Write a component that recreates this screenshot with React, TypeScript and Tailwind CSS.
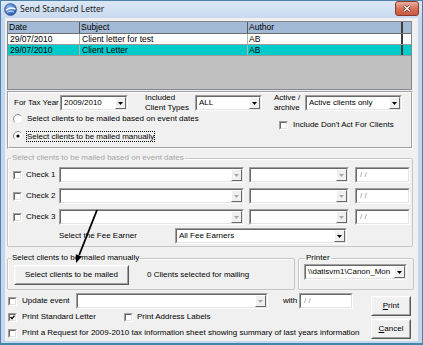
import React from "react"
import clsx from "clsx"

/**
 * Small pieces of a classic Windows dialog
 */
const Arrow = ({ disabled }: { disabled?: boolean }) => (
  <svg width="5" height="3" viewBox="0 0 5 3">
    <path d="M0 0h5L2.5 3z" fill={disabled ? "#a8a8a8" : "#000"} />
  </svg>
)

const Sunken: React.FC<{ className?: string; children?: React.ReactNode }> = ({
  className,
  children,
}) => (
  <div
    className={clsx(
      "flex shrink-0 bg-white border border-t-[#a0a0a0] border-l-[#a0a0a0] border-r-white border-b-white",
      className
    )}
  >
    <div className="relative flex flex-1 min-w-0 border border-t-[#696969] border-l-[#696969] border-r-[#e3e3e3] border-b-[#e3e3e3]">
      {children}
    </div>
  </div>
)

interface ComboProps {
  className: string
  text?: string
  disabled?: boolean
}

const Combo: React.FC<ComboProps> = ({ className, text, disabled }) => (
  <Sunken className={clsx("h-[16px]", className)}>
    <span className="flex-1 min-w-0 pl-[2px] leading-[12px] whitespace-nowrap overflow-hidden">
      {text}
    </span>
    <div className="w-[11px] flex items-center justify-center bg-[#f0f0f0] border border-t-white border-l-white border-r-[#696969] border-b-[#696969]">
      <Arrow disabled={disabled} />
    </div>
  </Sunken>
)

const DateBox = ({ className }: { className: string }) => (
  <Sunken className={clsx("h-[16px]", className)}>
    <span className="pl-[3px] leading-[12px] text-[#8c8c8c]">/ /</span>
  </Sunken>
)

const Check = ({ checked }: { checked?: boolean }) => (
  <Sunken className="w-[9px] h-[9px]">
    {checked && (
      <svg className="absolute left-0 top-0" width="5" height="5" viewBox="0 0 5 5">
        <path d="M0.5 2l1.5 1.7L4.5 0.6" stroke="#000" strokeWidth="1.3" fill="none" />
      </svg>
    )}
  </Sunken>
)

const Radio = ({ checked }: { checked?: boolean }) => (
  <svg width="10" height="10" viewBox="0 0 10 10" className="shrink-0">
    <circle cx="5" cy="5" r="4.5" fill="#fff" />
    <path d="M8.2 1.8A4.5 4.5 0 0 0 1.8 8.2" stroke="#8a8a8a" fill="none" />
    <path d="M1.8 8.2A4.5 4.5 0 0 0 8.2 1.8" stroke="#e8e8e8" fill="none" />
    {checked && <circle cx="5" cy="5" r="1.6" fill="#000" />}
  </svg>
)

const Btn: React.FC<{ className: string; children: React.ReactNode }> = ({
  className,
  children,
}) => (
  <div
    className={clsx(
      "flex shrink-0 bg-[#f0f0f0] border border-t-white border-l-white border-r-[#5a5a5a] border-b-[#5a5a5a]",
      className
    )}
  >
    <div className="flex-1 flex items-center justify-center border border-t-[#f4f4f4] border-l-[#f4f4f4] border-r-[#a0a0a0] border-b-[#a0a0a0]">
      {children}
    </div>
  </div>
)

const Group: React.FC<{
  title: string
  className: string
  legendClass?: string
  disabled?: boolean
  children: React.ReactNode
}> = ({ title, className, legendClass, disabled, children }) => (
  <fieldset
    className={clsx(
      "min-w-0 border border-[#c6c6c6] rounded-[2px] shadow-[inset_1px_1px_0_#fff]",
      className
    )}
  >
    <legend
      className={clsx(
        "px-[1px] leading-[10px]",
        legendClass ?? "ml-[3px]",
        disabled ? "text-[#a3a3a3]" : "text-black"
      )}
    >
      {title}
    </legend>
    {children}
  </fieldset>
)

const rows = [
  { date: "29/07/2010", subject: "Client letter for test", author: "AB", selected: false },
  { date: "29/07/2010", subject: "Client Letter", author: "AB", selected: true },
]

const App: React.FC = () => {
  return (
    <div className="relative w-[423px] h-[345px] flex flex-col bg-[#c4d7ee] border border-[#4f82a8] border-b-2 border-b-[#3f87a8] font-['Liberation_Sans',Arial,sans-serif] text-[8px] text-black overflow-hidden">
      {/* title bar */}
      <div className="h-[17px] flex items-center pl-[3px] shrink-0 bg-gradient-to-b from-[#dbe7f6] to-[#c8daf0]">
        <svg width="13" height="13" viewBox="0 0 13 13">
          <defs>
            <radialGradient id="ic" cx="0.4" cy="0.35" r="0.7">
              <stop offset="0" stopColor="#8fc0ff" />
              <stop offset="1" stopColor="#1f4f9e" />
            </radialGradient>
          </defs>
          <circle cx="6.5" cy="6.5" r="6" fill="url(#ic)" stroke="#2a4f86" strokeWidth="0.6" />
          <path d="M2 7.5C4 5 8 4.5 11.5 6" stroke="#fff" strokeWidth="1.4" fill="none" />
          <path d="M3 9.5C5 8 8 8 10 9" stroke="#dbeaff" strokeWidth="0.9" fill="none" />
        </svg>
        <span className="ml-[3px] font-['Noto_Sans',sans-serif] text-[8.5px] text-[#1b1b1b]">
          Send Standard Letter
        </span>
        <div className="ml-auto mr-[3px] self-start w-[24px] h-[15px] rounded-[3px] border border-[#8a3a2a] bg-gradient-to-b from-[#eab0a2] via-[#d8705a] to-[#c85a40] flex items-center justify-center">
          <svg width="8" height="7" viewBox="0 0 8 7">
            <path d="M1 0.8l6 5.4M7 0.8l-6 5.4" stroke="#6a2a1c" strokeWidth="2.6" />
            <path d="M1 0.8l6 5.4M7 0.8l-6 5.4" stroke="#fff" strokeWidth="1.5" />
          </svg>
        </div>
      </div>

      {/* client area */}
      <div className="flex-1 flex flex-col mx-[4px] mb-[2px] bg-[#f0f0f0] min-h-0">
        {/* letters list */}
        <div className="mt-[3px] ml-[2px] w-[405px] h-[69px] shrink-0 border border-[#828790] bg-[#c0c0c0] flex flex-col">
          <div className="h-[12px] flex bg-[#a3bad7] border-b border-[#6c6c6c] leading-[11px] text-[8.5px]">
            <div className="w-[72px] pl-[1px] border-r border-[#5a5a5a]">Date</div>
            <div className="w-[168px] pl-[1px] border-r border-[#5a5a5a]">Subject</div>
            <div className="w-[155px] pl-[1px] border-r-2 border-[#3c3c3c]">Author</div>
          </div>
          {rows.map((r) => (
            <div
              key={r.subject}
              className={clsx(
                "h-[11px] flex leading-[10px] text-[8.5px] border-b border-[#9a9a9a]",
                r.selected ? "bg-[#00cbcb]" : "bg-white"
              )}
            >
              <div className="w-[72px] pl-[2px] border-r border-[#b4b4b4]">{r.date}</div>
              <div className="w-[168px] pl-[2px] border-r border-[#b4b4b4]">{r.subject}</div>
              <div className="w-[155px] pl-[1px] border-r-2 border-[#3c3c3c]">{r.author}</div>
            </div>
          ))}
        </div>

        {/* tax year panel */}
        <div className="mt-[1px] ml-[2px] w-[406px] h-[58px] shrink-0 border border-t-[#a0a0a0] border-l-[#a0a0a0] border-r-white border-b-white">
          <div className="h-full border border-t-white border-l-white border-r-[#a0a0a0] border-b-[#a0a0a0]">
            <div className="mt-[2px] h-[16px] flex items-center">
              <span className="w-[51px] pl-[5px] shrink-0">For Tax Year</span>
              <Combo className="w-[68px]" text="2009/2010" />
              <span className="ml-[17px] w-[50px] shrink-0 leading-[10px]">
                Included
                <br />
                Client Types
              </span>
              <Combo className="w-[67px]" text="ALL" />
              <span className="ml-[12px] w-[31px] shrink-0 leading-[10px]">
                Active /
                <br />
                archive
              </span>
              <Combo className="w-[97px]" text="Active clients only" />
            </div>
            <div className="flex">
              <div className="w-[270px] shrink-0 pl-[4px]">
                <div className="mt-[2px] h-[12px] flex items-center">
                  <Radio />
                  <span className="ml-[4px]">Select clients to be mailed based on event dates</span>
                </div>
                <div className="mt-[5px] h-[12px] flex items-center">
                  <Radio checked />
                  <span className="ml-[3px] border border-dotted border-black leading-[9px]">
                    Select clients to be mailed manually
                  </span>
                </div>
              </div>
              <div className="mt-[9px] h-[10px] flex items-center">
                <Check />
                <span className="ml-[5px]">Include Don't Act For Clients</span>
              </div>
            </div>
          </div>
        </div>

        {/* event dates group */}
        <Group
          title="Select clients to be mailed based on event dates"
          className="mt-[4px] ml-[2px] w-[406px] pb-[2px]"
          disabled
        >
          {["Check 1", "Check 2", "Check 3"].map((c, i) => (
            <div
              key={c}
              className={clsx("h-[16px] flex items-center pl-[5px]", i === 0 ? "mt-[4px]" : "mt-[5px]")}
            >
              <Check />
              <span className="ml-[4px] w-[33px] shrink-0">{c}</span>
              <Combo className="w-[185px]" disabled />
              <Combo className="ml-[5px] w-[100px]" disabled />
              <DateBox className="ml-[6px] w-[55px]" />
            </div>
          ))}
          <div className="mt-[3px] h-[16px] flex items-center pl-[51px]">
            <span className="w-[116px] shrink-0">Select the Fee Earner</span>
            <Combo className="w-[172px]" text="All Fee Earners" />
          </div>
        </Group>

        {/* manual + printer groups */}
        <div className="mt-[6px] ml-[2px] flex shrink-0">
          <Group title="Select clients to be mailed manually" className="w-[288px] pb-[4px]">
            <div className="mt-[2px] flex items-center">
              <Btn className="ml-[6px] w-[115px] h-[20px]">Select clients to be mailed</Btn>
              <span className="ml-[18px]">0 Clients selected for mailing</span>
            </div>
          </Group>
          <Group title="Printer" className="ml-[3px] w-[116px]" legendClass="ml-[6px]">
            <Combo className="mt-[1px] ml-[5px] w-[103px]" text={"\\\\datisvm1\\Canon_Mon"} />
          </Group>
        </div>

        {/* options and buttons */}
        <div className="flex">
          <div className="flex-1 pl-[3px]">
            <div className="mt-[3px] h-[16px] flex items-center">
              <Check />
              <span className="ml-[5px] w-[54px] shrink-0">Update event</span>
              <Combo className="w-[192px]" disabled />
              <span className="ml-[15px] w-[16px] shrink-0">with</span>
              <DateBox className="w-[54px]" />
            </div>
            <div className="h-[16px] flex items-center">
              <Check checked />
              <span className="ml-[5px] w-[102px] shrink-0">Print Standard Letter</span>
              <Check />
              <span className="ml-[4px]">Print Address Labels</span>
            </div>
            <div className="h-[16px] flex items-center">
              <Check />
              <span className="ml-[5px] whitespace-nowrap">
                Print a Request for 2009-2010 tax information sheet showing summary of last years
                information
              </span>
            </div>
          </div>
          <div className="mr-[7px] flex flex-col">
            <Btn className="mt-[6px] w-[40px] h-[20px]">
              <span>
                <u>P</u>rint
              </span>
            </Btn>
            <Btn className="mt-[3px] w-[40px] h-[20px]">
              <span>
                <u>C</u>ancel
              </span>
            </Btn>
          </div>
        </div>
      </div>

      {/* annotation arrow drawn over the dialog */}
      <svg
        className="absolute -left-px -top-px pointer-events-none"
        width="423"
        height="345"
        viewBox="0 0 423 345"
      >
        <path d="M97 210L79.2 255" stroke="#000" strokeWidth="1.8" />
        <path d="M76 263L82 256.5L75.8 254.2z" fill="#000" />
      </svg>
    </div>
  )
}

export default App
